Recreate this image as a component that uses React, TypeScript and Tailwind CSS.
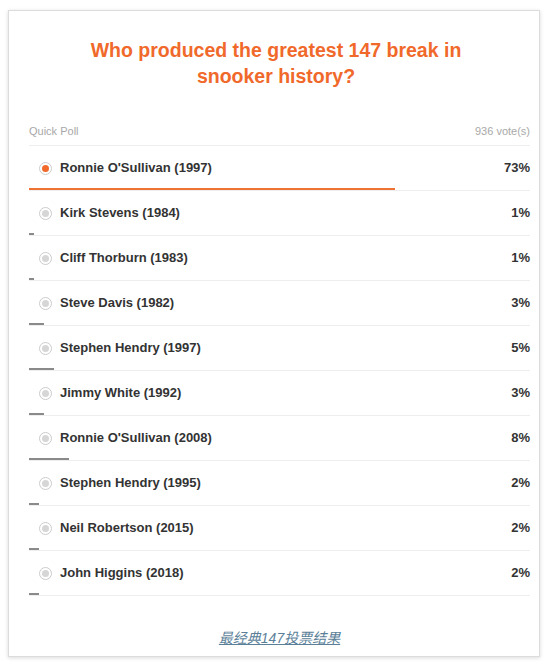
const options = [
  { name: "Ronnie O'Sullivan (1997)", pct: 73, selected: true },
  { name: 'Kirk Stevens (1984)', pct: 1 },
  { name: 'Cliff Thorburn (1983)', pct: 1 },
  { name: 'Steve Davis (1982)', pct: 3 },
  { name: 'Stephen Hendry (1997)', pct: 5 },
  { name: 'Jimmy White (1992)', pct: 3 },
  { name: "Ronnie O'Sullivan (2008)", pct: 8 },
  { name: 'Stephen Hendry (1995)', pct: 2 },
  { name: 'Neil Robertson (2015)', pct: 2 },
  { name: 'John Higgins (2018)', pct: 2 },
]

export default function App() {
  return (
    <div className="bg-white min-h-[665px] pt-[10px] font-['Liberation_Sans',Arial,sans-serif]">
      <div className="ml-[8px] w-[532px] border border-[#dcdcdc] shadow-[0_1px_4px_rgba(0,0,0,0.15)] bg-white pl-[20px] pr-[9px] pt-[26px] pb-[6px]">
        {/* Question */}
        <h2 className="text-[19.5px] leading-[26px] font-bold text-[#f0692b] text-center pl-[43px] pr-[50px]">
          Who produced the greatest 147 break in snooker history?
        </h2>

        {/* Header */}
        <div className="mt-[29px] h-[28px] flex items-center justify-between border-b border-[#eeeeee] text-[11px] text-[#a8a8a8]">
          <span>Quick Poll</span>
          <span>936 vote(s)</span>
        </div>

        {/* Options */}
        {options.map((o) => (
          <div key={o.name} className="border-b border-[#eeeeee]">
            <div className="h-[42px] pt-[2px] flex items-center justify-between">
              <div className="flex items-center">
                <span className="ml-[10px] w-[13px] h-[13px] rounded-full border border-[#cccccc] bg-white flex items-center justify-center">
                  <span className={o.selected ? 'w-[7px] h-[7px] rounded-full bg-[#f0692b]' : 'w-[7px] h-[7px] rounded-full bg-[#d6d6d6]'}></span>
                </span>
                <span className="ml-[8px] text-[13px] font-bold text-[#333]">{o.name}</span>
              </div>
              <span className="text-[13px] font-bold text-[#333]">{o.pct}%</span>
            </div>
            <div
              className={o.selected ? 'h-[2px] bg-[#ee7333]' : 'h-[2px] bg-[#8a8a8a]'}
              style={{ width: `${o.pct}%` }}
            ></div>
          </div>
        ))}

        {/* Footer link */}
        <div className="pt-[30px] text-center">
          <a className="text-[14px] leading-[18px] italic underline text-[#5b7f99] font-['Liberation_Sans','Noto_Sans_CJK_SC',sans-serif]">
            最经典147投票结果
          </a>
        </div>
      </div>
    </div>
  )
}
